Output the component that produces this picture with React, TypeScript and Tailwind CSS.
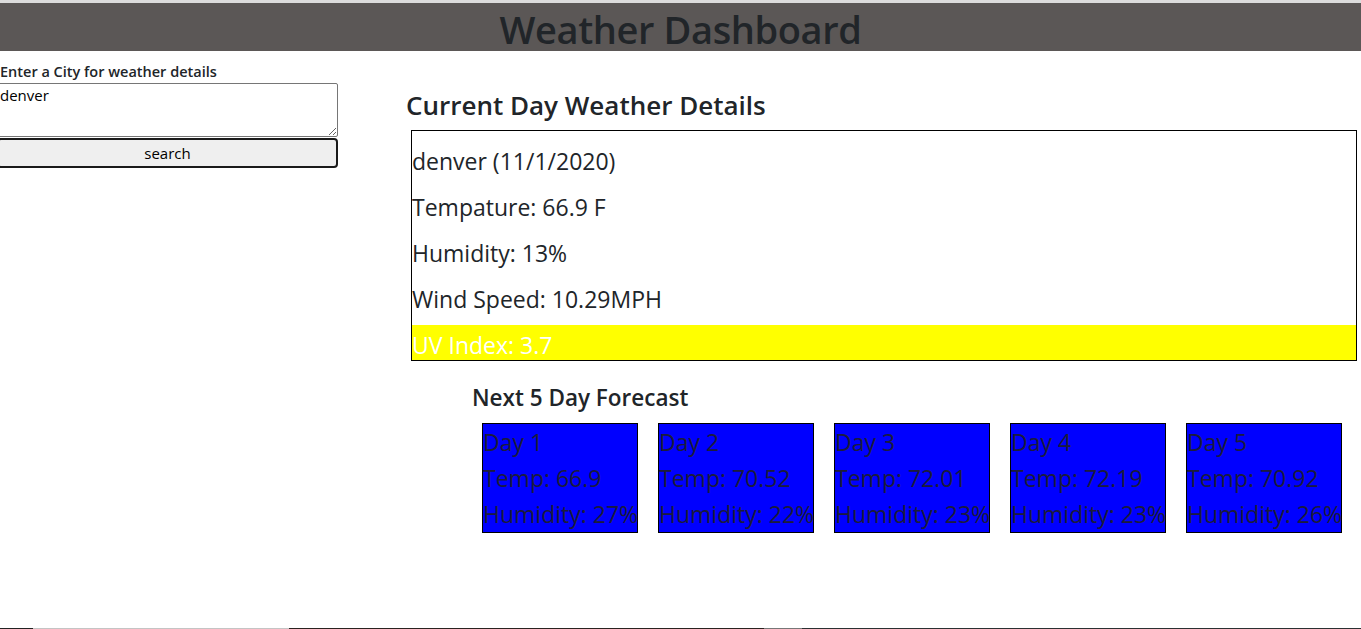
const current = [
  "denver (11/1/2020)",
  "Tempature: 66.9 F",
  "Humidity: 13%",
  "Wind Speed: 10.29MPH",
];

const forecast = [
  { day: "Day 1", temp: "66.9", humidity: "27%" },
  { day: "Day 2", temp: "70.52", humidity: "22%" },
  { day: "Day 3", temp: "72.01", humidity: "23%" },
  { day: "Day 4", temp: "72.19", humidity: "23%" },
  { day: "Day 5", temp: "70.92", humidity: "26%" },
];

function SearchPanel() {
  return (
    <aside className="w-[341px] ml-[-3px] shrink-0 pt-[11px]">
      <label className="block pl-[3px] text-[14.5px] font-semibold leading-[20px] mb-[1px]">
        Enter a City for weather details
      </label>
      <textarea
        defaultValue="denver"
        className="block w-full h-[54px] border border-[#767676] rounded-[2px] px-[2px] py-[1px] text-[15px] leading-[20px] text-black bg-white resize-y"
      />
      <button className="block w-full h-[30px] mt-[1px] bg-[#efefef] border-2 border-[#1a1a1a] rounded-[4px] text-[15px] leading-none text-black">
        search
      </button>
    </aside>
  );
}

export default function App() {
  return (
    <div className="h-[629px] flex flex-col bg-white text-[#212529] font-['Open_Sans','Noto_Sans',sans-serif] overflow-hidden">
      <div className="h-[3px] bg-[#dcdcdc] shrink-0" />
      <header className="h-[48px] bg-[#5b5756] flex items-center justify-center shrink-0">
        <h1 className="text-[38px] font-semibold leading-none tracking-[-0.4px] mt-[4px]">Weather Dashboard</h1>
      </header>

      <div className="flex">
        <SearchPanel />

        <main className="flex-1 pl-[68px] pr-[4px]">
          <h3 className="text-[26px] font-semibold leading-[32px] mt-[38px] mb-[9px]">
            Current Day Weather Details
          </h3>
          <div className="ml-[5px] border border-black pt-[10px]">
            {current.map((line) => (
              <p key={line} className="text-[23px] leading-[40px] h-[35px] mb-[11px] whitespace-nowrap">
                {line}
              </p>
            ))}
            <p className="text-[23px] leading-[40px] h-[35px] bg-[#ffff00] text-white whitespace-nowrap">
              UV Index: 3.7
            </p>
          </div>

          <h4 className="ml-[66px] mt-[22px] text-[22.5px] font-semibold leading-[30px]">Next 5 Day Forecast</h4>
          <div className="ml-[76px] mt-[10px] flex gap-[20px]">
            {forecast.map((f) => (
              <div key={f.day} className="w-[156px] h-[110px] bg-[#0000ff] border border-black text-[23px] leading-[36px] text-[#1c1c3a] whitespace-nowrap">
                <p>{f.day}</p>
                <p>Temp: {f.temp}</p>
                <p>Humidity: {f.humidity}</p>
              </div>
            ))}
          </div>
        </main>
      </div>

      <div className="mt-auto h-[1px] flex shrink-0">
        <div className="w-[33px] bg-[#222222]" />
        <div className="w-[256px] bg-[#c4c4c4]" />
        <div className="w-[475px] bg-[#2a2220]" />
        <div className="w-[38px] bg-[#777777]" />
        <div className="flex-1 bg-[#2b3032]" />
      </div>
    </div>
  );
}
